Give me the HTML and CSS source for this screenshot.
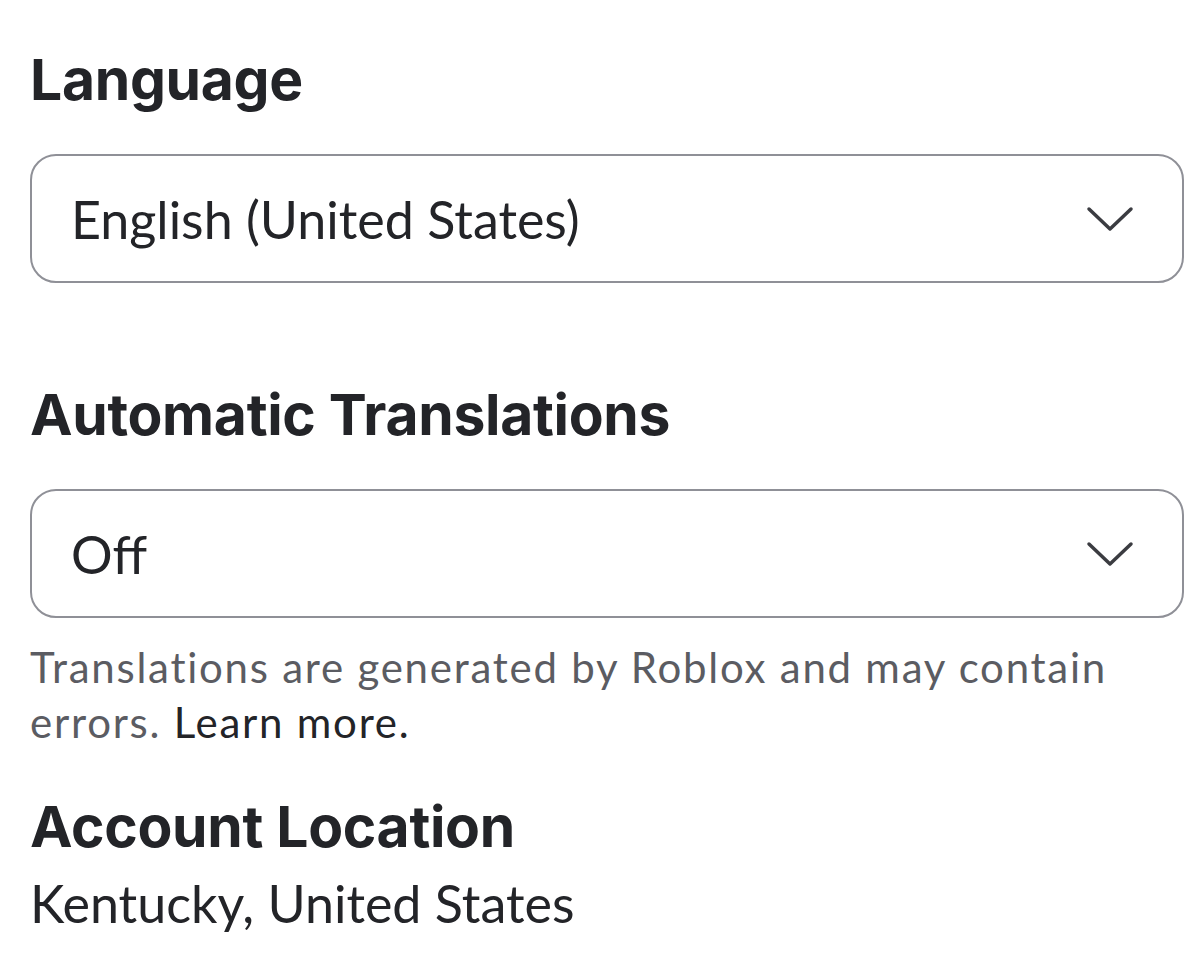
FILE: index.html
```html
<!DOCTYPE html>
<html lang="en">
<head>
    <meta charset="UTF-8">
    <meta name="viewport" content="width=device-width, initial-scale=1.0">
    <title>Settings</title>
    <link rel="stylesheet" href="styles.css">
</head>
<body>

<div class="settings">
    <!-- Language -->
    <section class="field">
        <h2>Language</h2>
        <div class="select">
            <span>English (United States)</span>
            <svg class="chevron" viewBox="0 0 48 26" width="48" height="26">
                <polyline points="3,3 24,23 45,3" />
            </svg>
        </div>
    </section>

    <!-- Automatic Translations -->
    <section class="field translations">
        <h2>Automatic Translations</h2>
        <div class="select">
            <span>Off</span>
            <svg class="chevron" viewBox="0 0 48 26" width="48" height="26">
                <polyline points="3,3 24,23 45,3" />
            </svg>
        </div>
        <p class="hint"><span>Translations are generated by Roblox and may contain</span> <span>errors.</span> <a href="#">Learn more.</a></p>
    </section>

    <!-- Account Location -->
    <section class="field location">
        <h2>Account Location</h2>
        <p class="value">Kentucky, United States</p>
    </section>
</div>

</body>
</html>
```

FILE: styles.css
```css
* {
    margin: 0;
    padding: 0;
    box-sizing: border-box;
    font-family: Lato, "Noto Sans", sans-serif;
}
body {
    background: #ffffff;
    color: #232428;
}
.settings {
    width: 1184px;
    padding: 44px 0 0 30px;
}
h2 {
    font-family: Inter, Lato, sans-serif;
    font-size: 57px;
    font-weight: 700;
    line-height: 72px;
    letter-spacing: -0.3px;
    color: #232428;
}
.select {
    display: flex;
    align-items: center;
    justify-content: space-between;
    height: 129px;
    margin-top: 38px;
    padding: 0 48px 0 39px;
    border: 2.5px solid #8f9097;
    border-radius: 26px;
    font-size: 52px;
}
.chevron {
    fill: none;
    stroke: #3b3c41;
    stroke-width: 3.5;
    stroke-linecap: round;
    stroke-linejoin: round;
}
.translations {
    margin-top: 96px;
}
.hint {
    margin-top: 22px;
    font-size: 42px;
    line-height: 55px;
    letter-spacing: 1.75px;
    color: #5b5c62;
}
.hint a {
    color: #232428;
    text-decoration: none;
}
.location {
    margin-top: 41px;
}
.value {
    margin-top: 4px;
    font-size: 52px;
    line-height: 72px;
    color: #232428;
}
```
